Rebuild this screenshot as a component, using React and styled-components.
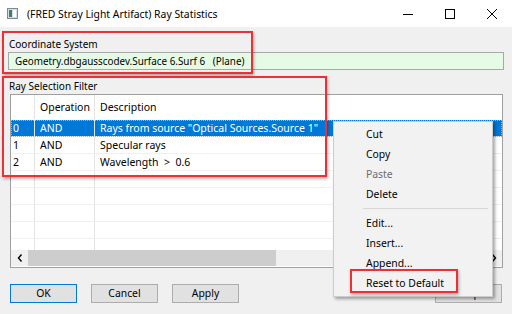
import styled, { createGlobalStyle } from "styled-components";

const GlobalStyle = createGlobalStyle`
  html, body {
    margin: 0;
    padding: 0;
    background: #ffffff;
  }
  body {
    font-family: "Noto Sans", "Open Sans", sans-serif;
    font-size: 10.5px;
    color: #000;
  }
`;

const rows = [
  { id: "0", op: "AND", desc: 'Rays from source "Optical Sources.Source 1"', selected: true },
  { id: "1", op: "AND", desc: "Specular rays" },
  { id: "2", op: "AND", desc: "Wavelength  >  0.6" },
  { id: "", op: "", desc: "" },
  { id: "", op: "", desc: "" },
  { id: "", op: "", desc: "" },
  { id: "", op: "", desc: "" },
  { id: "", op: "", desc: "" },
];

const menuItems = [
  { label: "Cut" },
  { label: "Copy" },
  { label: "Paste", disabled: true },
  { label: "Delete" },
  { separator: true },
  { label: "Edit..." },
  { label: "Insert..." },
  { label: "Append..." },
  { label: "Reset to Default" },
];

function AppIcon() {
  return (
    <svg width="11" height="11" viewBox="0 0 11 11">
      <rect x="0.5" y="0.5" width="10" height="10" fill="#d8dde2" stroke="#7d8a96" />
      <rect x="2" y="2" width="3" height="7" fill="#3f7f6a" />
      <rect x="6" y="2" width="3" height="7" fill="#ffffff" />
    </svg>
  );
}

export default function App() {
  return (
    <>
      <GlobalStyle />
      <StyledWindow>
        <StyledTitleBar>
          <AppIcon />
          <StyledTitle>(FRED Stray Light Artifact) Ray Statistics</StyledTitle>
          <StyledControls>
            <StyledControl>
              <svg width="10" height="10" viewBox="0 0 10 10">
                <line x1="0" y1="5.5" x2="10" y2="5.5" stroke="#000" strokeWidth="1" />
              </svg>
            </StyledControl>
            <StyledControl>
              <svg width="10" height="10" viewBox="0 0 10 10">
                <rect x="0.5" y="0.5" width="9" height="9" fill="none" stroke="#000" strokeWidth="1" />
              </svg>
            </StyledControl>
            <StyledControl>
              <svg width="10" height="10" viewBox="0 0 10 10">
                <path d="M0 0 L10 10 M10 0 L0 10" stroke="#000" strokeWidth="1" />
              </svg>
            </StyledControl>
          </StyledControls>
        </StyledTitleBar>

        <StyledContent>
          <StyledLabel>Coordinate System</StyledLabel>
          <StyledField>Geometry.dbgausscodev.Surface 6.Surf 6   (Plane)</StyledField>

          <StyledLabel $gap>Ray Selection Filter</StyledLabel>
          <StyledListBox>
            <StyledGrid>
              <StyledRow $header>
                <StyledCell />
                <StyledCell>Operation</StyledCell>
                <StyledCell>Description</StyledCell>
              </StyledRow>
              {rows.map((row, i) => (
                <StyledRow key={i} $selected={row.selected}>
                  <StyledCell $index>{row.id}</StyledCell>
                  <StyledCell>{row.op}</StyledCell>
                  <StyledCell>{row.desc}</StyledCell>
                </StyledRow>
              ))}
            </StyledGrid>
            <StyledScrollBar>
              <StyledArrow>
                <svg width="6" height="8" viewBox="0 0 6 8">
                  <path d="M4.5 0.5 L1.5 4 L4.5 7.5" fill="none" stroke="#000" strokeWidth="1.4" />
                </svg>
              </StyledArrow>
              <StyledThumb />
              <StyledTrack />
              <StyledArrow>
                <svg width="6" height="8" viewBox="0 0 6 8">
                  <path d="M1.5 0.5 L4.5 4 L1.5 7.5" fill="none" stroke="#000" strokeWidth="1.4" />
                </svg>
              </StyledArrow>
            </StyledScrollBar>
          </StyledListBox>

          <StyledButtonRow>
            <StyledButton $default>OK</StyledButton>
            <StyledButton>Cancel</StyledButton>
            <StyledButton>Apply</StyledButton>
            <StyledButton $push>Help</StyledButton>
          </StyledButtonRow>
        </StyledContent>

        <StyledMenu>
          {menuItems.map((item, i) =>
            item.separator ? (
              <StyledSeparator key={i} />
            ) : (
              <StyledMenuItem key={i} $disabled={item.disabled}>
                {item.label}
              </StyledMenuItem>
            )
          )}
        </StyledMenu>

        <StyledMark $left={2} $top={31} $width={251} $height={43} />
        <StyledMark $left={2} $top={76} $width={325} $height={101} />
        <StyledMark $left={350} $top={269} $width={108} $height={24} />
      </StyledWindow>
    </>
  );
}

const StyledWindow = styled.div`
  position: relative;
  width: 512px;
  height: 314px;
  overflow: hidden;
  background-color: #f0f0f0;
`;

const StyledTitleBar = styled.div`
  height: 27px;
  box-sizing: border-box;
  display: flex;
  align-items: center;
  padding-left: 7px;
  background-color: #ffffff;
`;

const StyledTitle = styled.span`
  margin-left: 9px;
  font-size: 10.4px;
`;

const StyledControls = styled.div`
  margin-left: auto;
  display: flex;
  height: 100%;
`;

const StyledControl = styled.div`
  width: 41px;
  display: flex;
  align-items: center;
  justify-content: center;
  padding-left: 1px;
`;

const StyledContent = styled.div`
  padding: 9px 8px 0 8px;
  display: flex;
  flex-direction: column;
`;

const StyledLabel = styled.div`
  height: 16px;
  line-height: 16px;
  padding-left: 1px;
  margin-top: ${(p) => (p.$gap ? "8px" : "0")};
  font-size: 10px;
  color: #000;
`;

const StyledField = styled.div`
  height: 18px;
  box-sizing: border-box;
  border: 1px solid #a8a8a8;
  background-color: #e6fbe6;
  padding-left: 6px;
  line-height: 16px;
  font-size: 9.9px;
  white-space: pre;
`;

const StyledListBox = styled.div`
  height: 174px;
  margin: 0 1px 0 2px;
  box-sizing: border-box;
  border: 1px solid #a0a0a0;
  background-color: #ffffff;
  display: flex;
  flex-direction: column;
`;

const StyledGrid = styled.div`
  flex: 1;
  overflow: hidden;
`;

const StyledRow = styled.div`
  display: grid;
  grid-template-columns: 24px 60px 1fr;
  height: ${(p) => (p.$header ? "25px" : "17px")};
  box-sizing: border-box;
  border-bottom: 1px solid ${(p) => (p.$header ? "#ffffff" : "#f0f0f0")};
  background-color: ${(p) => (p.$selected ? "#0078d7" : "#ffffff")};
  color: ${(p) => (p.$selected ? "#ffffff" : "#000000")};
  outline: ${(p) => (p.$selected ? "1px dotted #f0a060" : "none")};
  outline-offset: -1px;
`;

const StyledCell = styled.div`
  display: flex;
  align-items: center;
  padding-left: ${(p) => (p.$index ? "2px" : "5px")};
  border-right: 1px solid #e3e3e3;
  font-size: 10.5px;
  white-space: pre;
  overflow: hidden;

  &:last-child {
    border-right: none;
  }
`;

const StyledScrollBar = styled.div`
  height: 16px;
  display: flex;
  background-color: #f0f0f0;
  margin-bottom: 1px;
`;

const StyledArrow = styled.div`
  width: 17px;
  display: flex;
  align-items: center;
  justify-content: center;
`;

const StyledThumb = styled.div`
  width: 248px;
  background-color: #cdcdcd;
`;

const StyledTrack = styled.div`
  flex: 1;
`;

const StyledButtonRow = styled.div`
  display: flex;
  gap: 14px;
  margin: 16px 2px 0 2px;
`;

const StyledButton = styled.button`
  width: 67px;
  height: 19px;
  box-sizing: border-box;
  margin-left: ${(p) => (p.$push ? "auto" : "0")};
  border: 1px solid ${(p) => (p.$default ? "#0078d7" : "#adadad")};
  background-color: #e1e1e1;
  font-family: "Noto Sans", "Open Sans", sans-serif;
  font-size: 10.4px;
  color: #000;
  padding: 0;
  line-height: 17px;
`;

const StyledMenu = styled.div`
  position: absolute;
  left: 333px;
  top: 121px;
  width: 160px;
  box-sizing: border-box;
  padding: 2px 2px 3px 2px;
  background-color: #f2f2f2;
  border: 1px solid #cccccc;
  box-shadow: 2px 2px 3px rgba(0, 0, 0, 0.35);
`;

const StyledMenuItem = styled.div`
  height: 20px;
  line-height: 20px;
  padding-left: 30px;
  font-size: 10.4px;
  color: ${(p) => (p.$disabled ? "#6d6d6d" : "#000000")};
  white-space: nowrap;
`;

const StyledSeparator = styled.div`
  height: 1px;
  margin: 4px 2px 4px 27px;
  background-color: #d7d7d7;
`;

const StyledMark = styled.div`
  position: absolute;
  left: ${(p) => p.$left}px;
  top: ${(p) => p.$top}px;
  width: ${(p) => p.$width}px;
  height: ${(p) => p.$height}px;
  box-sizing: border-box;
  border: 2px solid #ec3036;
  box-shadow: 1px 2px 3px rgba(0, 0, 0, 0.3);
  pointer-events: none;
`;
